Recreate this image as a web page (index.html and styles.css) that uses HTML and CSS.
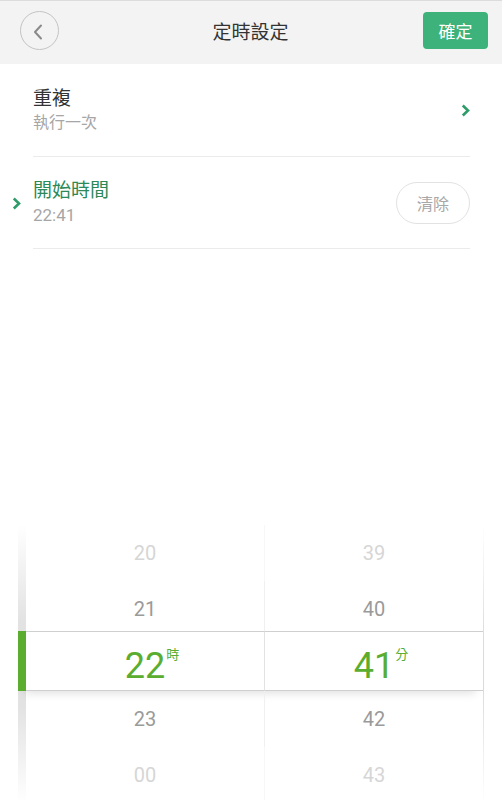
FILE: index.html
```html
<!DOCTYPE html>
<html lang="zh-Hant">
<head>
    <meta charset="UTF-8">
    <meta name="viewport" content="width=device-width, initial-scale=1.0">
    <title>定時設定</title>
    <link rel="stylesheet" href="styles.css">
</head>
<body>

    <div class="header">
        <div class="header-left">
            <button class="back-btn">
                <svg width="10" height="16" viewBox="0 0 10 16"><polyline points="8,1.5 2,8 8,14.5" fill="none" stroke="#8a8a8a" stroke-width="2" stroke-linecap="round" stroke-linejoin="round"/></svg>
            </button>
        </div>
        <div class="title">定時設定</div>
        <div class="header-right">
            <button class="ok-btn">確定</button>
        </div>
    </div>

    <div class="list">
        <div class="row">
            <div class="gutter"></div>
            <div class="row-body">
                <div class="row-text">
                    <div class="row-title">重複</div>
                    <div class="row-sub">執行一次</div>
                </div>
                <svg class="chev" width="9" height="13" viewBox="0 0 9 13"><polyline points="1.8,1.5 7,6.5 1.8,11.5" fill="none" stroke="#2e9c68" stroke-width="2.6"/></svg>
            </div>
        </div>
        <div class="row">
            <div class="gutter">
                <svg class="chev" width="9" height="13" viewBox="0 0 9 13"><polyline points="1.8,1.5 7,6.5 1.8,11.5" fill="none" stroke="#2e9c68" stroke-width="2.6"/></svg>
            </div>
            <div class="row-body">
                <div class="row-text">
                    <div class="row-title active">開始時間</div>
                    <div class="row-sub time">22:41</div>
                </div>
                <button class="clear-btn">清除</button>
            </div>
        </div>
    </div>

    <!-- 時間選擇器 -->
    <div class="picker">
        <div class="p-row far">
            <div class="cell hour">20</div>
            <div class="cell min">39</div>
        </div>
        <div class="p-row near">
            <div class="cell hour">21</div>
            <div class="cell min">40</div>
        </div>
        <div class="p-row sel">
            <div class="cell hour"><span class="num">22</span><span class="unit">時</span></div>
            <div class="cell min"><span class="num">41</span><span class="unit">分</span></div>
        </div>
        <div class="p-row near">
            <div class="cell hour">23</div>
            <div class="cell min">42</div>
        </div>
        <div class="p-row far">
            <div class="cell hour">00</div>
            <div class="cell min">43</div>
        </div>
    </div>

</body>
</html>
```

FILE: styles.css
```css
html, body {
    margin: 0;
    height: 800px;
    overflow: hidden;
}
body {
    background: #fff;
    font-family: Roboto, "Noto Sans CJK TC", sans-serif;
    color: #333;
}
button {
    font-family: inherit;
    cursor: pointer;
}

.header {
    box-sizing: border-box;
    height: 64px;
    display: grid;
    grid-template-columns: 1fr auto 1fr;
    align-items: center;
    padding: 0 14px 5px 20px;
    background: #f3f3f3;
    border-top: 1px solid #dcdcdc;
}
.title {
    font-size: 19px;
    color: #333;
    padding-right: 7px;
}
.header-right {
    display: flex;
    justify-content: flex-end;
}
.back-btn {
    width: 39px;
    height: 39px;
    border-radius: 50%;
    border: 1px solid #c4c4c4;
    background: transparent;
    padding: 0 3px 0 0;
    display: flex;
    align-items: center;
    justify-content: center;
}
.back-btn svg {
    margin-top: 3px;
}
.ok-btn {
    width: 65px;
    height: 37px;
    border: none;
    border-radius: 4px;
    background: #3db27a;
    color: #fff;
    font-size: 17px;
    padding: 0;
}

.row {
    display: flex;
}
.gutter {
    width: 33px;
    flex-shrink: 0;
    display: flex;
    align-items: center;
    justify-content: center;
    padding-top: 1px;
}
.row-body {
    flex: 1;
    margin-right: 32px;
    display: flex;
    align-items: center;
    justify-content: space-between;
    border-bottom: 1px solid #ebebeb;
}
.row:first-child .row-body {
    height: 92px;
}
.row:last-child .row-body {
    height: 91px;
}
.row-title {
    font-size: 19px;
    line-height: 24px;
    color: #333;
}
.row-title.active {
    color: #2b8a57;
}
.row-sub {
    font-size: 16px;
    line-height: 22px;
    color: #a6a6a6;
    margin-top: 1px;
}
.row-sub.time {
    font-size: 17px;
}
.row-body .chev {
    margin-right: 0;
}
.clear-btn {
    width: 74px;
    height: 42px;
    border-radius: 21px;
    border: 1px solid #e2e2e2;
    background: #fff;
    color: #a8a8a8;
    font-size: 16px;
    padding: 0;
}

.picker {
    margin: 276px 18px 0 18px;
    padding: 0 1px 0 8px;
    background:
        linear-gradient(to bottom, #fff 0%, #e2e2e2 35%, #e2e2e2 65%, #fff 100%) left top / 8px 100% no-repeat,
        linear-gradient(to bottom, #fff 0%, #dcdcdc 40%, #dcdcdc 60%, #fff 100%) right top / 1px 100% no-repeat;
}
.p-row {
    display: flex;
    height: 56px;
}
.cell {
    box-sizing: border-box;
    height: 100%;
    line-height: 56px;
    text-align: center;
    font-size: 20px;
}
.cell.hour {
    width: 238px;
    flex-shrink: 0;
}
.cell.min {
    flex: 1;
    border-left: 1px solid #f0f0f0;
}
.p-row.far .cell {
    color: #d6d6d6;
}
.p-row.far .cell.min {
    border-left-color: #f7f7f7;
}
.p-row.near .cell {
    color: #9a9a9a;
}
.p-row.sel {
    height: 60px;
    margin: -6px 0 0 -8px;
    padding-left: 8px;
    background: linear-gradient(#5aad2e, #5aad2e) left top / 8px 100% no-repeat, #fff;
    box-shadow: 0 9px 9px -7px rgba(0, 0, 0, 0.13);
}
.p-row.sel .cell {
    display: flex;
    justify-content: center;
    align-items: flex-start;
    border-top: 1px solid #cfcfcf;
    border-bottom: 1px solid #cfcfcf;
    padding-top: 16px;
    line-height: 1;
    color: #5aad2e;
}
.p-row.sel .cell.min {
    border-left-color: #e2e2e2;
}
.num {
    font-size: 36px;
    line-height: 1;
}
.unit {
    font-size: 13px;
    line-height: 1;
    margin: 0 0 0 1px;
    margin-right: -14px;
}
```
